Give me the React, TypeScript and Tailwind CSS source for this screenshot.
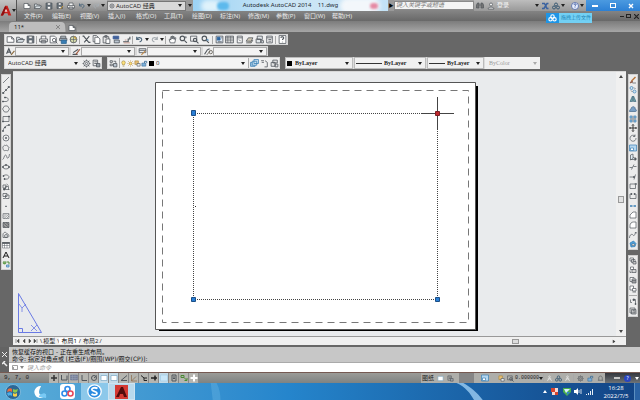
import React from "react";

type Layer = { d: string; c?: string; f?: string; w?: number };
type Glyph = Layer[];

const INK = "#50565c";
const BLUE = "#3a7fb5";

const G: Record<string, Glyph> = {
  newFile: [{ d: "M2 3h8l4 4v6H2zM10 3v4h4", f: "#fff" }],
  open: [{ d: "M1 13V4h5l1 2h5v2M1 13l3-5h11l-3 5z", f: "#d8dfe4" }],
  save: [{ d: "M2 2h12v12H2z", f: "#65707a" }, { d: "M5 2h6v4H5zM5 9h6v5H5z", f: "#fff", w: 1 }],
  saveAs: [{ d: "M2 2h11v11H2z", f: "#65707a" }, { d: "M5 2h5v4H5zM5 9h5v4H5z", f: "#fff", w: 1 }, { d: "M9 14l5-6", c: "#c99a3a", w: 2 }],
  print: [{ d: "M4 7V2h8v5M1 7h14v5H1zM4 10h8v4H4z", f: "#f2f2f2" }],
  preview: [{ d: "M2 2h8l3 3v9H2z", f: "#fff" }, { d: "M6 9a3 3 0 106 0a3 3 0 10-6 0M11 11l4 4" }],
  publish: [{ d: "M3 6V2h9v4M1 6h13v4H1z", f: "#aab2b8" }, { d: "M4 9h9v6H4z", f: BLUE, c: "#2d6590" }],
  globe: [{ d: "M2 8a6 6 0 1012 0a6 6 0 10-12 0", f: "#d4d9a8" }, { d: "M8 2v12M2 8h12", w: 1 }, { d: "M9 3l4 4", c: "#c99a3a", w: 2 }],
  cut: [{ d: "M3 2l9 11M13 2L4 13M1 2h3M12 13h3", w: 2 }],
  copy: [{ d: "M2 1h6l3 3v8H2z", f: "#fff" }, { d: "M5 4h6l3 3v8H5z", f: "#fff" }],
  paste: [{ d: "M2 3h10v11H2zM5 1h4v3H5z", f: "#e6e6e6" }, { d: "M7 7h7v8H7z", f: "#fff" }],
  match: [{ d: "M2 2h10v5H2z", f: "#3f5f9a", c: "#3f5f9a" }, { d: "M4 9h9v5H4z", f: "#b9c4cf" }],
  block: [{ d: "M2 12h9V7h3V3", w: 2 }, { d: "M3 14h11M5 9h3", c: "#c08a7a" }],
  undo: [{ d: "M3 8c2-5 9-4 9 0 0 3-3 4-4 4M3 3v5h5", c: "#50697d", w: 2 }],
  redo: [{ d: "M13 8C11 3 4 4 4 8c0 3 3 4 4 4M13 3v5H8", c: "#a7adb2", w: 2 }],
  pan: [{ d: "M4 14L2 8l2-1 1 2V3h2v4V2h2v5V3h2v5l1-3h2l-2 9z", f: "#fff" }],
  zoom: [{ d: "M2 6a4 4 0 108 0a4 4 0 10-8 0M9 9l5 5", w: 2 }, { d: "M12 2v4M10 4h4", w: 1 }],
  zoomWin: [{ d: "M1 2h11v9H1z" }, { d: "M6 9a3 3 0 106 0a3 3 0 10-6 0M11 11l4 4", w: 2 }],
  zoomPrev: [{ d: "M2 6a4 4 0 108 0a4 4 0 10-8 0M9 9l5 5", w: 2 }, { d: "M14 9h-4l2-2", c: BLUE }],
  props: [{ d: "M2 2h12v12H2z", f: "#dfe8f2" }, { d: "M4 4h5v5H4z", f: "#2d65a0", c: "#2d65a0" }, { d: "M11 5h2M5 12h7" }],
  gridIc: [{ d: "M1 2h14v12H1z", f: "#d6d6d6" }, { d: "M1 5h14M1 9h14M5 2v12M10 2v12", w: 1 }],
  palette: [{ d: "M4 2h9v12H4zM4 5h9M7 8l3 3", f: "#f4f4f4" }],
  sheets: [{ d: "M2 11l4-6h8l-3 6zM2 14h9l3-5", f: "#cfc7b4" }],
  markup: [{ d: "M4 2h9v6H4zM2 7h8v7H2zM11 10h4v4h-4z", f: "#e2e7ea" }],
  calc: [{ d: "M3 2h10v12H3zM3 5h10M6 8h5M6 11h5", f: "#f4f4f4" }],
  help: [{ d: "M2 1h12v14H2z", f: "#fff" }, { d: "M5 5c1-3 6-2 5 1-1 1-2 1-2 3M8 12v1", w: 2 }],
  textStyle: [{ d: "M1 12L5 3l4 9M3 9h5", w: 2 }, { d: "M9 14l6-7", c: "#8d6b3c", w: 2 }],
  dimStyle: [{ d: "M1 13h9M2 10l9-6", w: 2 }, { d: "M7 13l7-9", c: "#a2583c", w: 2 }],
  tableStyle: [{ d: "M2 3h12v7H2zM2 6h12", f: "#e8ecef" }, { d: "M6 14l7-7", c: "#c08a4a", w: 2 }],
  leader: [{ d: "M1 13l5-8 4-2", w: 2 }, { d: "M9 9a3 3 0 106 0a3 3 0 10-6 0M5 14l6-7", c: "#5f5a50" }],
  gear: [{ d: "M3 8a5 5 0 1010 0a5 5 0 10-10 0M6 8a2 2 0 104 0a2 2 0 10-4 0M8 1v2M8 13v2M1 8h2M13 8h2M3 3l2 2M11 11l2 2M13 3l-2 2M5 11l-2 2" }],
  layout: [{ d: "M2 2h8v10H2zM4 5h5M4 8h5" }, { d: "M8 8h6v6H8z", f: "#9aa2a8" }],
  layers: [{ d: "M2 3h4v3H2zM2 9h4v3H2zM8 4h4v3" }, { d: "M8 8h6v6H8z", f: "#b9c4cf" }],
  bulb: [{ d: "M4 6a4 4 0 118 0c0 2-2 3-2 5H6c0-2-2-3-2-5M6 14h4", f: "#ffe27a", c: "#9a8238" }],
  sun: [{ d: "M5 8a3 3 0 106 0a3 3 0 10-6 0M8 1v2M8 13v2M1 8h2M13 8h2M3 3l2 2M13 3l-2 2M3 13l2-2M13 13l-2-2", f: "#ffe27a", c: "#b3862a" }],
  freeze: [{ d: "M2 2h8v8H2z", f: "#e8c078", c: "#a98535" }, { d: "M7 8h7v6H7z", f: "#e8ecef" }],
  lock: [{ d: "M2 7h9v7H2z", f: "#7db0da", c: "#3f6f98" }, { d: "M8 7V3h5v4", c: "#3f6f98", w: 2 }],
  stack: [{ d: "M1 6h8v7H1z", f: "#a7cbe6", c: BLUE }, { d: "M4 4h8v7H4zM7 1h8v7H7z", f: "#cfe3f2", c: BLUE }],
  layerPrev: [{ d: "M2 3h5M3 6h4M9 3l4 3v8H8" }],
  layerState: [{ d: "M5 2h8v5H5zM2 6h7v7H2zM9 9h5v5H9z", f: "#e3e3e3" }],
  line: [{ d: "M2 14L14 2" }],
  xline: [{ d: "M2 14L14 2" }, { d: "M1 13h3v2H1zM7 7h2v2H7zM12 1h3v2h-3z", f: INK }],
  pline: [{ d: "M2 13h6c6 0 6-8 0-8H6" }, { d: "M1 12h2v2H1zM5 4h2v2H5z", f: INK }],
  polygon: [{ d: "M5 2h6l4 6-4 6H5L1 8z" }],
  rect: [{ d: "M2 3h12v10H2z" }, { d: "M1 12h2v2H1zM13 2h2v2h-2z", f: INK }],
  arc: [{ d: "M2 14C3 7 7 3 14 2" }, { d: "M1 13h2v2H1zM5 6h2v2H5zM13 1h2v2h-2z", f: INK }],
  circle: [{ d: "M2 8a6 6 0 1012 0a6 6 0 10-12 0" }, { d: "M7 7h2v2H7z", f: INK }],
  cloud: [{ d: "M3 4c2-3 3 0 4-1s4-1 4 1 3 1 3 3-2 2-1 4-3 3-4 2-3 1-5 0-1-2-2-4 0-3 1-5" }],
  spline: [{ d: "M1 13c3 0 3-9 6-9s2 8 5 6 2-5 3-8" }],
  ellipse: [{ d: "M2 8a6 4 0 1012 0a6 4 0 10-12 0" }, { d: "M7 3h2v2H7zM1 7h2v2H1zM13 7h2v2h-2z", f: INK }],
  earc: [{ d: "M3 6c3-4 11-2 11 2s-5 5-9 4" }, { d: "M2 5h2v2H2zM4 11h2v2H4z", f: INK }],
  insert: [{ d: "M2 4h6v6H2zM7 7h6v6H7zM9 2l4 3M12 13h3" }, { d: "M3 11h3v3H3z", f: INK }],
  mkblock: [{ d: "M2 3h8v6H2zM7 6h7v7H7zM2 13h4" }],
  point: [{ d: "M7 8h2v1H7z", f: INK }],
  hatch: [{ d: "M2 3h12v10H2zM2 7l4-4M2 11l8-8M4 13L14 4M9 13l5-5", w: 1 }],
  gradient: [{ d: "M2 3h12v10H2z", f: "#9a9a9a" }, { d: "M2 3l12 10M2 9l5 4M8 3l6 5" }],
  region: [{ d: "M2 13V6c2-5 7-4 8 0 4-1 6 7 0 7z" }, { d: "M5 10a3 3 0 106 0a3 3 0 10-6 0" }],
  table: [{ d: "M1 3h14v11H1zM1 9h14M5 5v9M10 5v9", f: "#fff", w: 1 }, { d: "M1 3h14v2H1z", f: INK }],
  mtext: [{ d: "M2 14L8 2l6 12M4 10h8", c: "#1c1c1c", w: 2 }],
  addsel: [{ d: "M2 5a3 3 0 106 0", f: "#6aa84f", c: "#4a8a34" }, { d: "M2 4h6M9 4h5v5", c: "#4a8a34", w: 2 }, { d: "M9 10h5v4H9z", f: "#a7cbe6", c: BLUE }],
  erase: [{ d: "M5 10l8-8", c: "#b7743a", w: 3 }, { d: "M2 14l3-4 3 2z", f: "#c9553f", c: "#7c5340" }, { d: "M7 14h7" }],
  copyObj: [{ d: "M2 4a3 3 0 106 0a3 3 0 10-6 0M8 11a3 3 0 106 0a3 3 0 10-6 0", f: "#cfe3f2", c: BLUE }, { d: "M4 9l3 3M10 3l3 3" }],
  mirror: [{ d: "M7 2L2 13h5zM9 2l5 11H9z", f: "#6ba3a5", c: "#426c80" }],
  offset: [{ d: "M1 13c0-4 3-4 4-8 5-4 8 0 7 3 3 0 4 5 1 5z", f: "#7a9fc4", c: "#45688c" }],
  array: [{ d: "M2 2h4v4H2zM10 2h4v4h-4zM2 10h4v4H2zM10 10h4v4h-4z", f: "#a7cbe6", c: BLUE }, { d: "M8 1v14M1 8h14", w: 1 }],
  move: [{ d: "M8 1v14M1 8h14M6 3l2-2 2 2M6 13l2 2 2-2M3 6L1 8l2 2M13 6l2 2-2 2", c: "#222", w: 1.7 }],
  rotate: [{ d: "M12 4a6 6 0 10 2 4M12 1v4H8" }],
  scale: [{ d: "M1 2h14v12H1z", f: "#b5d6ef", c: BLUE }, { d: "M3 8h6v5H3z", f: "#fff", c: BLUE }],
  stretch: [{ d: "M3 14V4l5-2v9zM8 8l6 5H3", f: "#e3eef6" }, { d: "M12 9l3 3-3 3z", f: INK }],
  trim: [{ d: "M1 9h5M9 7h6M5 13L10 3" }],
  extend: [{ d: "M1 8h9M13 3l-3 10" }, { d: "M9 7h2v2H9z", f: INK }],
  brkPt: [{ d: "M2 4h11v9H2V4" }, { d: "M12 3h3v2h-3z", f: "#fff" }],
  brk: [{ d: "M5 4H2v9h12V4h-3" }, { d: "M4 3h2v2H4zM10 3h2v2h-2z", f: INK }],
  join: [{ d: "M2 8h5M9 8h5", c: BLUE, w: 3 }],
  chamfer: [{ d: "M2 14V8l6-6h6v12z", f: "#fff" }],
  fillet: [{ d: "M2 14V9c0-4 3-7 7-7h5v12z", f: "#fff" }],
  blend: [{ d: "M1 14c0-7 5-9 7-6s4 0 5-6" }, { d: "M14 2v3", w: 2 }],
  explode: [{ d: "M2 6l7-4 5 5-2 6-8 1z", f: "#4f9fd8", c: "#2f7db8" }, { d: "M6 8h5v3H6z", f: "#fff", w: 1 }],
  order1: [{ d: "M2 2h7v6H2zM5 5h7v6H5z", f: "#fff" }, { d: "M8 9h6v5H8z", f: "#c6c6c6" }],
  order2: [{ d: "M3 2h6v5H3z", f: "#fff" }, { d: "M6 7h8v6H6z", f: "#d5d5d5" }, { d: "M2 9v4h3" }],
  order3: [{ d: "M2 3h8v8H2z", f: "#fff" }, { d: "M6 6h8v8H6zM6 9h8M6 12h8", f: "#c6c6c6" }],
  order4: [{ d: "M2 2h7v8H2z", f: "#fff" }, { d: "M7 7h7v5H7z", f: "#fff" }, { d: "M7 14h7" }],
  order5: [{ d: "M3 3v6h3M8 3h5v9" }, { d: "M8 2h3v3H8zM12 11h2v2h-2z", f: INK }],
  order6: [{ d: "M2 2h10v10H2zM5 5h9v9H5z", f: "#ddd" }, { d: "M7 7h4M7 10h4" }],
  binoc: [{ d: "M1 12V6l2-4h3v10zM10 12V2h3l2 4v6zM6 6h4", f: "#737373" }],
  user: [{ d: "M5 5a3 3 0 106 0a3 3 0 10-6 0M2 14c0-5 12-5 12 0z", f: "#eee" }],
  exchange: [{ d: "M2 3h5l5 10h3M2 13h4l6-10h3", c: "#3a62a0", w: 3 }],
  rings: [{ d: "M5 5a3 3 0 106 0a3 3 0 10-6 0M1 11a3 3 0 106 0a3 3 0 10-6 0M9 11a3 3 0 106 0a3 3 0 10-6 0", c: "#3a5a74", w: 2 }],
  question: [{ d: "M1 8a7 7 0 1014 0a7 7 0 10-14 0", f: "#e8eefc", c: "#3a56a0" }, { d: "M6 6c0-3 5-3 4 0-1 1-2 1-2 3M8 11v1", c: "#3a56a0", w: 2 }],
  plus: [{ d: "M8 2v12M2 8h12", c: "#333", w: 3 }],
  snap: [{ d: "M3 2v10h11V3", w: 2 }],
  gridB: [{ d: "M1 2h14v10H1z", f: "#77809a", c: "#77809a" }, { d: "M1 5h14M1 9h14M5 2v10M10 2v10", c: "#98a2b6", w: 1 }],
  ortho: [{ d: "M4 2v11h10", w: 2 }],
  polar: [{ d: "M3 8a5 5 0 1010 0a5 5 0 10-10 0M8 8l6-5", w: 2 }],
  box: [{ d: "M2 3h12v10H2z", f: "#fff", c: "#7ba7c4" }],
  angle: [{ d: "M14 3L2 13h12", w: 2 }],
  ducs: [{ d: "M3 2v12h11M3 14L12 5", c: "#8a6a4a" }],
  dyn: [{ d: "M2 3l6 5h6M8 8v5h6", c: "#222", w: 2 }],
  lwt: [{ d: "M2 8h12M10 3v10", c: "#222", w: 3 }],
  tpy: [{ d: "M1 2h14v12H1z", f: "#c9e6f8", c: "#a0cbe5" }],
  qp: [{ d: "M4 2h8v12H4zM6 6h4M6 9h4", w: 2 }],
  cycle: [{ d: "M2 3h6v4H2zM8 7l5 5M9 13h5V8", c: "#4a8a34", w: 2 }],
  monitor: [{ d: "M8 1v14M1 8h14", c: "#fff", w: 4 }],
  man: [{ d: "M6 4a2 2 0 104 0a2 2 0 10-4 0M3 14l5-8 5 8M4 9h8", c: "#eee" }],
  bell: [{ d: "M2 12h12M4 12V6c1-5 7-5 8 0v6" }],
};

function Ic({ n, s = 9 }: { n: string; s?: number }) {
  return (
    <svg width={s} height={s} viewBox="0 0 16 16" className="shrink-0" aria-hidden="true">
      {G[n].map((l, i) => (
        <path key={i} d={l.d} fill={l.f ?? "none"} stroke={l.c ?? INK} strokeWidth={l.w ?? 1.4} />
      ))}
    </svg>
  );
}

function Tool({ n, s, cls = "w-[10px]" }: { n: string; s?: number; cls?: string }) {
  return (
    <button type="button" aria-label={n} className={`flex shrink-0 items-center justify-center ${cls}`}>
      <Ic n={n} s={s} />
    </button>
  );
}

const Sep = () => <span className="mx-px h-2 w-px shrink-0 bg-[#a9a9a9]" />;
const Caret = ({ cls = "text-[#222]" }: { cls?: string }) => (
  <svg width="4" height="3" viewBox="0 0 4 3" className={`shrink-0 ${cls}`} aria-hidden="true">
    <path d="M0 0h4L2 3z" fill="currentColor" />
  </svg>
);

function Combo({ label, value, wrap, text = "", disabled }: { label: string; value: string; wrap: string; text?: string; disabled?: boolean }) {
  return (
    <label className={`relative flex items-center ${wrap}`}>
      <select
        aria-label={label}
        disabled={disabled}
        className={`h-full w-full appearance-none bg-transparent text-[6px] leading-none outline-none ${text}`}
      >
        <option>{value}</option>
      </select>
      <span className="pointer-events-none absolute right-[3px] flex">
        <Caret cls={disabled ? "text-[#aaa]" : "text-[#222]"} />
      </span>
    </label>
  );
}

const menus = ["文件(F)", "编辑(E)", "视图(V)", "插入(I)", "格式(O)", "工具(T)", "绘图(D)", "标注(N)", "修改(M)", "参数(P)", "窗口(W)", "帮助(H)"];
const std1 = [["newFile", "open", "save"], ["print", "preview", "publish", "globe"], ["cut", "copy", "paste", "match", "block"]];
const std2 = ["pan", "zoom", "zoomWin", "zoomPrev"];
const std3 = ["props", "gridIc", "palette", "sheets", "markup", "calc"];
const styles = [
  ["textStyle", "文字样式"],
  ["dimStyle", "标注样式"],
  ["tableStyle", "表格样式"],
  ["leader", "多重引线样式"],
];
const draw = ["line", "xline", "pline", "polygon", "rect", "arc", "circle", "cloud", "spline", "ellipse", "earc", "insert", "mkblock", "point", "hatch", "gradient", "region", "table", "mtext", "addsel"];
const modify = ["erase", "copyObj", "mirror", "offset", "array", "move", "rotate", "scale", "stretch", "trim", "extend", "brkPt", "brk", "join", "chamfer", "fillet", "blend", "explode"];
const status = ["plus", "snap", "gridB", "ortho", "polar", "box", "box", "angle", "ducs", "dyn", "lwt", "tpy", "qp", "cycle", "monitor"];

function AppLogo({ s }: { s: number }) {
  return (
    <svg width={s} height={s} viewBox="0 0 16 16" aria-hidden="true">
      <path d="M1 14L7 1h3l5 13h-4l-1-3H6l-2 3z" fill="#c8201c" />
      <path d="M7 1L1 14h3l5-9z" fill="#8e0f10" />
      <path d="M8 5l2 4H6z" fill="#f6d4d0" />
    </svg>
  );
}

function TitleBar() {
  return (
    <header className="flex h-[21px] shrink-0 bg-gradient-to-b from-[#a4a4a4] via-[#858585] to-[#686868]">
      <button type="button" aria-label="应用程序菜单" className="flex w-[17px] shrink-0 items-center justify-center border-r border-[#555] bg-gradient-to-b from-[#c4c4c4] to-[#8c8c8c]">
        <AppLogo s={12} />
        <Caret />
      </button>
      <div className="flex min-w-0 flex-1 flex-col">
        <div className="flex h-[11px] items-center">
          <div className="flex h-full w-[90px] shrink-0 items-center bg-gradient-to-b from-[#bdbdbd] to-[#8b8b8b] pl-1">
            {["newFile", "open", "save", "saveAs", "print", "undo"].map((n) => (
              <Tool key={n} n={n} s={8} cls="w-[11px]" />
            ))}
            <Caret />
            <Tool n="redo" s={8} cls="w-[10px]" />
            <Caret />
          </div>
          <div className="flex h-[10px] w-[79px] shrink-0 items-center border border-[#777] bg-[#d9d9d9] pl-px">
            <Ic n="gear" s={6} />
            <Combo label="工作空间" value="AutoCAD 经典" wrap="h-full flex-1" text="pl-px text-[#222]" />
          </div>
          <button type="button" aria-label="自定义" className="flex h-full w-[7px] items-center justify-center bg-[#999]">
            <Caret />
          </button>
          <div className="relative flex h-full min-w-0 flex-1 items-center justify-center overflow-hidden bg-gradient-to-r from-[#9cd3f5] via-[#cde6f5] to-[#c3e2f6]">
            <span className="absolute left-[8px] h-3 w-5 rounded-full bg-[#dff2fb] blur-[2px]" />
            <span className="absolute left-[24px] h-2 w-3 rounded-full bg-[#5db9ec] blur-[1px]" />
            <span className="absolute right-[8px] h-4 w-10 rounded-full bg-[#f3f7fb] blur-[2px]" />
            <span className="absolute right-[10px] h-[6px] w-[8px] rounded-full bg-[#e58aa4] blur-[1px]" />
            <h1 className="relative whitespace-pre font-['Noto_Sans','Noto_Sans_CJK_SC',sans-serif] text-[6px] text-[#1c2830]">
              Autodesk AutoCAD 2014    11.dwg
            </h1>
          </div>
          <span className="flex h-full w-[6px] items-center justify-center bg-[#999] text-[5px] text-black">▶</span>
          <input aria-label="搜索" placeholder="键入关键字或短语" className="h-[9px] w-[80px] shrink-0 border border-[#8a8a8a] bg-[#f4f4f4] px-px text-[6px] italic placeholder:text-[#777]" />
          <div className="flex h-full w-[112px] shrink-0 items-center bg-gradient-to-b from-[#bdbdbd] to-[#999] text-[6px] text-[#f4f4f4]">
            <Tool n="binoc" s={8} cls="w-[12px]" />
            <Tool n="user" s={8} cls="w-[10px]" />
            <button type="button" className="ml-px">登录</button>
            <span className="ml-auto flex"><Caret /></span>
            <Tool n="exchange" s={8} cls="w-[11px]" />
            <Tool n="rings" s={8} cls="w-[11px]" />
            <Caret />
            <Tool n="question" s={8} cls="ml-1 w-[11px]" />
            <span className="mr-[2px] flex"><Caret /></span>
          </div>
          <div className="flex h-full w-[54px] shrink-0 items-center justify-around bg-gradient-to-b from-[#4b9ae0] to-[#2c80d4]">
            <button type="button" aria-label="最小化" className="h-[2px] w-[6px] bg-white" />
            <button type="button" aria-label="还原" className="h-[5px] w-[6px] border border-white" />
            <button type="button" aria-label="关闭" className="flex">
              <svg width="6" height="6" viewBox="0 0 6 6"><path d="M1 1l4 4M5 1L1 5" stroke="#fff" strokeWidth="1.4" /></svg>
            </button>
          </div>
        </div>
        <nav className="flex h-[10px] items-center pl-[3px]">
          {menus.map((m) => (
            <button key={m} type="button" className="w-[28px] whitespace-nowrap pl-1 text-left text-[6px] leading-none text-[#ececec]">
              {m}
            </button>
          ))}
          <div className="ml-auto flex w-[21px] items-center justify-around">
            <button type="button" aria-label="最小化图形" className="h-px w-[4px] bg-[#222]" />
            <button type="button" aria-label="还原图形" className="h-[4px] w-[5px] border border-[#222]" />
            <button type="button" aria-label="关闭图形" className="flex">
              <svg width="5" height="5" viewBox="0 0 5 5"><path d="M0 0l5 5M5 0L0 5" stroke="#222" strokeWidth="1.2" /></svg>
            </button>
          </div>
        </nav>
      </div>
    </header>
  );
}

const bar = "flex items-center border border-[#d8d8d8] bg-[#efefef]";

function Toolbars() {
  return (
    <div className="flex shrink-0 flex-col items-start gap-px bg-[#676767] pb-[2px] pl-1 pt-[2px]">
      <div className={`${bar} h-[11px]`}>
        {std1.map((g, i) => (
          <React.Fragment key={i}>
            {g.map((n) => <Tool key={n} n={n} />)}
            <Sep />
          </React.Fragment>
        ))}
        <Tool n="undo" cls="w-[11px]" />
        <Caret />
        <Tool n="redo" cls="w-[11px]" />
        <Caret />
        <Sep />
        {std2.map((n) => <Tool key={n} n={n} cls="w-[11px]" />)}
        <Sep />
        {std3.map((n) => <Tool key={n} n={n} cls="w-[10px]" />)}
        <Sep />
        <Tool n="help" cls="w-[10px]" />
      </div>
      <div className="flex h-[10px]">
        {styles.map(([n, label]) => (
          <div key={n} className={`${bar} w-[66px]`}>
            <Tool n={n} />
            <Combo label={label} value="" wrap="h-[9px] flex-1 border border-[#aaa] bg-[#f3f3f3]" />
          </div>
        ))}
      </div>
      <div className="flex h-[12px] gap-[5px]">
        <div className={`${bar} w-[98px]`}>
          <Combo label="工作空间" value="AutoCAD 经典" wrap="h-full flex-1" text="pl-[3px] text-[#222]" />
          <Tool n="gear" cls="w-[10px]" />
          <Tool n="layout" cls="w-[10px]" />
        </div>
        <div className={`${bar} w-[173px]`}>
          <Tool n="layers" cls="w-[11px]" />
          <span className="flex h-full min-w-0 flex-1 items-center border-x border-[#aaa] bg-[#f4f4f4]">
            {["bulb", "sun", "freeze", "lock"].map((n) => <Tool key={n} n={n} s={7} cls="w-[7px]" />)}
            <span className="ml-px h-[5px] w-[5px] bg-black" />
            <Combo label="图层" value="0" wrap="h-full flex-1" text="pl-[2px] text-[#222]" />
          </span>
          {["stack", "layerPrev", "layerState"].map((n) => <Tool key={n} n={n} />)}
        </div>
        <div className="flex w-[255px] gap-px bg-[#dcdcdc] font-['Liberation_Serif','Noto_Sans_CJK_SC',serif] font-bold">
          <span className="flex w-[68px] items-center border border-[#bbb] bg-[#f0f0f0] pl-px">
            <span className="h-[5px] w-[5px] bg-black" />
            <Combo label="颜色" value="ByLayer" wrap="h-full flex-1" text="pl-[3px] font-bold text-[#222]" />
          </span>
          <span className="flex w-[72px] items-center border border-[#bbb] bg-[#f0f0f0] pl-px">
            <span className="h-px w-[26px] bg-[#333]" />
            <Combo label="线型" value="ByLayer" wrap="h-full flex-1" text="pl-[2px] font-bold text-[#222]" />
          </span>
          <span className="flex w-[57px] items-center border border-[#bbb] bg-[#f0f0f0] pl-px">
            <span className="h-px w-[16px] bg-[#333]" />
            <Combo label="线宽" value="ByLayer" wrap="h-full flex-1" text="pl-[2px] font-bold text-[#222]" />
          </span>
          <Combo label="打印样式" value="ByColor" disabled wrap="flex-1 bg-[#f0f0f0]" text="pl-1 font-normal text-[#999]" />
        </div>
      </div>
    </div>
  );
}

function Drawing() {
  return (
    <svg width="603" height="264" viewBox="13 72 603 264" aria-label="布局1" className="block shrink-0">
      <path d="M159 330H478M477 86V331" stroke="#000" strokeWidth="2" fill="none" />
      <path d="M155.500 82.500H475.500V329.500H155.500z" fill="#fff" stroke="#555" />
      <path d="M162.500 90.500H468.500V322.500H162.500z" fill="none" stroke="#777" strokeDasharray="7 5" />
      <path d="M193 113.500H437M193 299.500H437M193.500 113V299M437.500 113V299" fill="none" stroke="#444" strokeDasharray="1 1" />
      <path d="M437.500 97V130M421 113.500H454" stroke="#444" />
      <path d="M195 206h1v1h-1z" fill="#333" />
      <g fill="#2a7fd6" stroke="#1c4f86">
        <path d="M191.500 110.500h4v5h-4zM191.500 297.500h4v4h-4zM435.500 297.500h4v4h-4z" />
        <path d="M435.500 111.500h4v4h-4z" fill="#c0282c" stroke="#7d2024" />
      </g>
      <g fill="none" stroke="#6a7ae4">
        <path d="M18.500 293.500V332.500H41.500zM18.500 328.500h4v4" />
        <path d="M19 304l3 4 4-4M22 308v4M31 325l6 6M37 325l-6 6" strokeWidth="0.800" />
      </g>
    </svg>
  );
}

const vbar = "flex w-[10px] flex-col items-center border border-[#d0d0d0] bg-[#ececec]";

function Workspace() {
  return (
    <main className="flex min-h-0 flex-1 bg-[#676767]">
      <aside className="w-[13px] shrink-0 pl-px pt-[3px]">
        <div className={`${vbar} h-[196px]`}>
          {draw.map((n) => <Tool key={n} n={n} s={8} cls="min-h-0 flex-1" />)}
        </div>
      </aside>
      <section className="mb-[2px] flex min-w-0 flex-1 flex-col border-t border-[#d8d8d8] bg-[#e9ebed]">
        <div className="flex min-h-0 flex-1">
          <div className="min-w-0 flex-1 overflow-hidden"><Drawing /></div>
          <div className="flex w-[10px] shrink-0 flex-col items-center bg-[#f0f0f0] py-[3px]">
            <button type="button" aria-label="向上滚动" className="flex rotate-180"><Caret cls="text-[#444]" /></button>
            <div className="grow-[12]" />
            <span className="h-[7px] w-[6px] border border-[#999] bg-[#e2e2e2]" />
            <div className="grow-[13]" />
            <button type="button" aria-label="向下滚动" className="flex"><Caret cls="text-[#444]" /></button>
          </div>
        </div>
        <div className="flex h-[9px] shrink-0 items-center border-t border-[#999] bg-[#f0f0f0] text-[6px] leading-none text-[#222]">
          <svg width="27" height="8" viewBox="0 0 27 8" aria-hidden="true" className="shrink-0">
            <path d="M3 2v4M6 2L4 4l2 2zM12 2l-2 2 2 2zM16 2l2 2-2 2zM21 2l2 2-2 2zM24 2v4" fill="#444" stroke="#444" strokeWidth="0.500" />
          </svg>
          <span>\</span>
          <button type="button" className="pl-px pr-[2px]">模型</button>
          <span>\</span>
          <button type="button" className="bg-white px-[2px] text-black">布局1</button>
          <span>/</span>
          <button type="button" className="pl-[2px] pr-px">布局2</button>
          <span>/</span>
          <span className="ml-auto mr-[93px] h-[5px] w-[7px] border border-[#999] bg-[#ddd]" />
          <button type="button" aria-label="向右滚动" className="mr-[10px] flex -rotate-90"><Caret cls="text-[#444]" /></button>
        </div>
      </section>
      <aside className="flex w-[14px] shrink-0 flex-col items-center gap-[5px] pt-[3px]">
        <div className={`${vbar} h-[176px]`}>
          {modify.map((n) => <Tool key={n} n={n} s={8} cls="min-h-0 flex-1" />)}
        </div>
        <div className={`${vbar} h-[62px]`}>
          {["order1", "order2", "order3", "order4"].map((n) => <Tool key={n} n={n} s={8} cls="min-h-0 flex-1" />)}
          <span className="my-px h-px w-2 bg-[#aaa]" />
          {["order5", "order6"].map((n) => <Tool key={n} n={n} s={8} cls="min-h-0 flex-1" />)}
        </div>
      </aside>
    </main>
  );
}

function CommandLine() {
  return (
    <section className="flex h-[25px] shrink-0">
      <div className="flex w-[9px] shrink-0 flex-col items-center justify-between bg-[#636363] py-[5px]">
        <svg width="5" height="5" viewBox="0 0 5 5" aria-hidden="true"><path d="M0 0l5 5M5 0L0 5" stroke="#eee" /></svg>
        <svg width="6" height="6" viewBox="0 0 6 6" aria-hidden="true"><path d="M1 1l4 4M0 3l3-3" stroke="#eee" strokeWidth="1.500" /></svg>
      </div>
      <div className="flex min-w-0 flex-1 flex-col">
        <div className="h-[16px] border-b border-[#aaa] bg-[#c7c7c7] pl-[3px] pt-px font-['DejaVu_Sans','Noto_Sans_CJK_SC',sans-serif] text-[6px] leading-[7px] text-[#111]">
          <p>恢复缓存的视口 - 正在重生成布局。</p>
          <p>命令: 指定对角点或 [栏选(F)/圈围(WP)/圈交(CP)]:</p>
        </div>
        <label className="flex flex-1 items-center gap-[2px] bg-white pl-[3px]">
          <svg width="6" height="5" viewBox="0 0 6 5" aria-hidden="true"><path d="M.5.500h5v4h-5zM1 2l1 1-1 1" fill="none" stroke="#888" strokeWidth="0.800" /></svg>
          <Caret cls="text-[#888]" />
          <input aria-label="命令" placeholder="键入命令" className="h-full flex-1 bg-transparent pl-px text-[6px] italic outline-none placeholder:text-[#999]" />
        </label>
      </div>
    </section>
  );
}

function StatusBar() {
  return (
    <footer className="flex h-[11px] shrink-0 items-center border-t border-[#765a52] bg-gradient-to-b from-[#9b9b97] to-[#7f8382] text-[6px] leading-none text-[#222]">
      <output className="w-[49px] shrink-0 whitespace-pre pl-1 font-['Liberation_Mono','Noto_Sans_CJK_SC',monospace]">9, 7, 0</output>
      <div className="flex h-full items-center">
        {status.map((n, i) => (
          <Tool key={i} n={n} s={8} cls={n === "box" || n === "tpy" ? "h-full w-[10px] border-r border-[#888] bg-[#c4dbe8]" : "h-full w-[10px] border-r border-[#888] bg-[#b5b5b0]"} />
        ))}
      </div>
      <div className="ml-auto flex h-full items-center bg-[#aeaeaa]">
        <button type="button" className="w-[14px] shrink-0">图纸</button>
        <Tool n="box" s={7} />
        <Tool n="layout" s={7} />
        <span className="ml-1 h-full w-[15px] bg-[#868686]" />
        <Tool n="scale" s={8} cls="ml-[5px] w-[12px]" />
        <Tool n="freeze" s={7} cls="ml-[5px] w-[10px]" />
        <Tool n="zoomWin" s={7} cls="w-[9px]" />
        <button type="button" className="flex w-[27px] items-center justify-between font-['Liberation_Mono','Noto_Sans_CJK_SC',monospace]">
          <span className="text-[5px]">0.000000</span>
          <Caret />
        </button>
        <Sep />
        {["man", "rings", "man"].map((n, i) => <Tool key={i} n={n} s={7} cls="w-[9px]" />)}
        <Sep />
        {["gear", "lock", "bell"].map((n) => <Tool key={n} n={n} s={7} cls="w-[10px]" />)}
        <span className="flex h-full w-[35px] items-center justify-end gap-1 bg-gradient-to-b from-[#34373d] to-[#6f7478] pr-px">
          <span className="h-[2px] w-[6px] bg-[#c8c8c8]" />
          <span className="flex h-[7px] w-[7px] items-center justify-center rounded-full bg-[#2a45c0] text-[5px] text-white">?</span>
          <Caret cls="text-white" />
        </span>
      </div>
    </footer>
  );
}

function Taskbar() {
  return (
    <footer className="flex h-[17px] shrink-0 items-center bg-gradient-to-r from-[#5badd8] via-[#2585cc] via-45% to-[#124384]">
      <button type="button" aria-label="开始" className="flex w-[25px] justify-center">
        <svg width="16" height="16" viewBox="0 0 16 16">
          <circle cx="8" cy="8" r="7.500" fill="#2c6795" stroke="#8cc3e2" strokeWidth="0.800" />
          <path d="M3 5c2-1 3-1 4 0v3c-1-1-3-1-5 0z" fill="#ef6a3a" />
          <path d="M8 5c2 1 3 1 5 0l-1 3c-1 1-3 1-4 0z" fill="#8cc84b" />
          <path d="M2 9c2-1 4-1 5 0v3c-1-1-3-1-4 0z" fill="#4aaee8" />
          <path d="M8 9c1 1 3 1 4 0v3c-1 1-3 1-4 0z" fill="#f7cf46" />
        </svg>
      </button>
      <button type="button" aria-label="浏览器" className="flex w-[29px] justify-center">
        <svg width="14" height="14" viewBox="0 0 14 14">
          <path d="M8 1a6 6 0 105 8c-2 2-7 2-7-2 0-3 2-5 2-6z" fill="#fff" />
          <path d="M6 12c0-3 3-3 3-3 3-2 5 1 4 4z" fill="#78c9f5" />
        </svg>
      </button>
      <button type="button" aria-label="网盘" className="flex w-[27px] justify-center">
        <svg width="15" height="15" viewBox="0 0 15 15">
          <rect width="15" height="15" rx="3" fill="#fff" />
          <g fill="none" strokeWidth="1.600">
            <circle cx="7.500" cy="5" r="2.500" stroke="#2d8bea" />
            <circle cx="4.500" cy="9.500" r="2.500" stroke="#2d8bea" />
            <circle cx="10.500" cy="9.500" r="2.500" stroke="#e8485a" />
          </g>
        </svg>
      </button>
      <button type="button" aria-label="搜狗" className="flex h-full w-[27px] items-center justify-center border border-[#8cc9ec] bg-[#8cc8ea]">
        <svg width="15" height="15" viewBox="0 0 15 15">
          <circle cx="7.500" cy="7.500" r="6.700" fill="#2b8be0" stroke="#fff" strokeWidth="1.300" />
          <path d="M10.500 4.500C8 3 4.500 4 5 6c.5 1.600 5 1.200 5 3.200 0 2-3.500 2.300-5.500.8" fill="none" stroke="#fff" strokeWidth="1.800" />
        </svg>
      </button>
      <button type="button" aria-label="AutoCAD" className="flex h-full w-[27px] items-center justify-center border border-[#cde4f2] bg-[#b9d9ec]">
        <span className="flex bg-[#d43a34]">
          <svg width="13" height="14" viewBox="0 0 13 14"><path d="M1 12L6 2h2l4 10H9L8 9H5l-1 3z" fill="#520b0d" /></svg>
        </span>
      </button>
      <svg viewBox="0 0 420 17" preserveAspectRatio="none" className="h-full min-w-0 flex-1" aria-hidden="true">
        <path d="M78 0h6c3 6 4 11 4 17h-8z" fill="#7cc4ea" opacity="0.300" />
        <path d="M331 0c9 4 14 10 18 17h9C352 9 345 4 338 0z" fill="#9ccdf2" opacity="0.800" />
      </svg>
      <div className="flex w-[55px] shrink-0 items-center justify-between pr-1">
        <span className="flex rotate-180"><Caret cls="text-white" /></span>
        <svg width="8" height="9" viewBox="0 0 8 9" aria-hidden="true"><path d="M1 1h6v7H1z" fill="#f4d9d2" /><path d="M0 1h4v4H0zM4 5h3v3H4z" fill="#d8452f" /></svg>
        <svg width="8" height="9" viewBox="0 0 8 9" aria-hidden="true"><path d="M0 1h8v4L4 9 0 5z" fill="#49b04a" /><path d="M1 2h6L3 6z" fill="#d7f0ff" /><path d="M4 5h3L4 8z" fill="#2f7fd6" /></svg>
        <svg width="8" height="9" viewBox="0 0 8 9" aria-hidden="true"><path d="M0 3h2l2-2v7L2 6H0z" fill="#fff" /><path d="M5 3v3M7 2v5" stroke="#fff" strokeWidth="0.800" /></svg>
        <svg width="8" height="8" viewBox="0 0 8 8" aria-hidden="true"><path d="M0 7h1V6H0zM2 7h1V5H2zM4 7h1V3H4zM6 7h1V1H6z" fill="#e6eef5" /></svg>
      </div>
      <time className="w-[36px] shrink-0 text-center text-[6px] leading-[8px] text-white">
        16:28
        <br />
        2022/7/5
      </time>
      <button type="button" aria-label="显示桌面" className="h-full w-[6px] border-l border-[#5c8fc0] bg-[#2a62a4]" />
    </footer>
  );
}

export default function App() {
  return (
    <div className="relative flex h-screen flex-col overflow-hidden bg-[#676767] font-['Open_Sans','Noto_Sans_CJK_SC',sans-serif]">
      <TitleBar />
      <div className="flex h-[11px] shrink-0 items-end bg-gradient-to-b from-[#7c7c7c] to-[#a6a6a6] pl-[9px]">
        <div className="flex h-[10px] w-[56px] items-center justify-between rounded-t-sm bg-[#bdbdbd] px-[5px] text-[6px] leading-none text-[#111]">
          <span>11*</span>
          <button type="button" aria-label="关闭选项卡" className="flex">
            <svg width="4" height="4" viewBox="0 0 4 4"><path d="M0 0l4 4M4 0L0 4" stroke="#777" strokeWidth="0.800" /></svg>
          </button>
        </div>
        <Tool n="newFile" s={8} cls="ml-px h-[9px] w-[11px] bg-[#8c8c8c]" />
      </div>
      <Toolbars />
      <Workspace />
      <CommandLine />
      <StatusBar />
      <Taskbar />
      <button type="button" className="absolute right-[48px] top-[13px] flex h-[10px] w-[46px] items-center overflow-hidden bg-[#72d0f4] text-[5px] text-[#2384b4]">
        <span className="flex h-full w-[13px] shrink-0 items-center justify-center bg-[#1e95e6]">
          <svg width="9" height="8" viewBox="0 0 9 8" aria-hidden="true">
            <g fill="none" stroke="#fff" strokeWidth="1.100"><circle cx="4.500" cy="2.500" r="1.700" /><circle cx="2.500" cy="5.300" r="1.700" /><circle cx="6.500" cy="5.300" r="1.700" /></g>
          </svg>
        </span>
        <span className="whitespace-nowrap pl-[2px]">拖拽上传文件</span>
      </button>
    </div>
  );
}
